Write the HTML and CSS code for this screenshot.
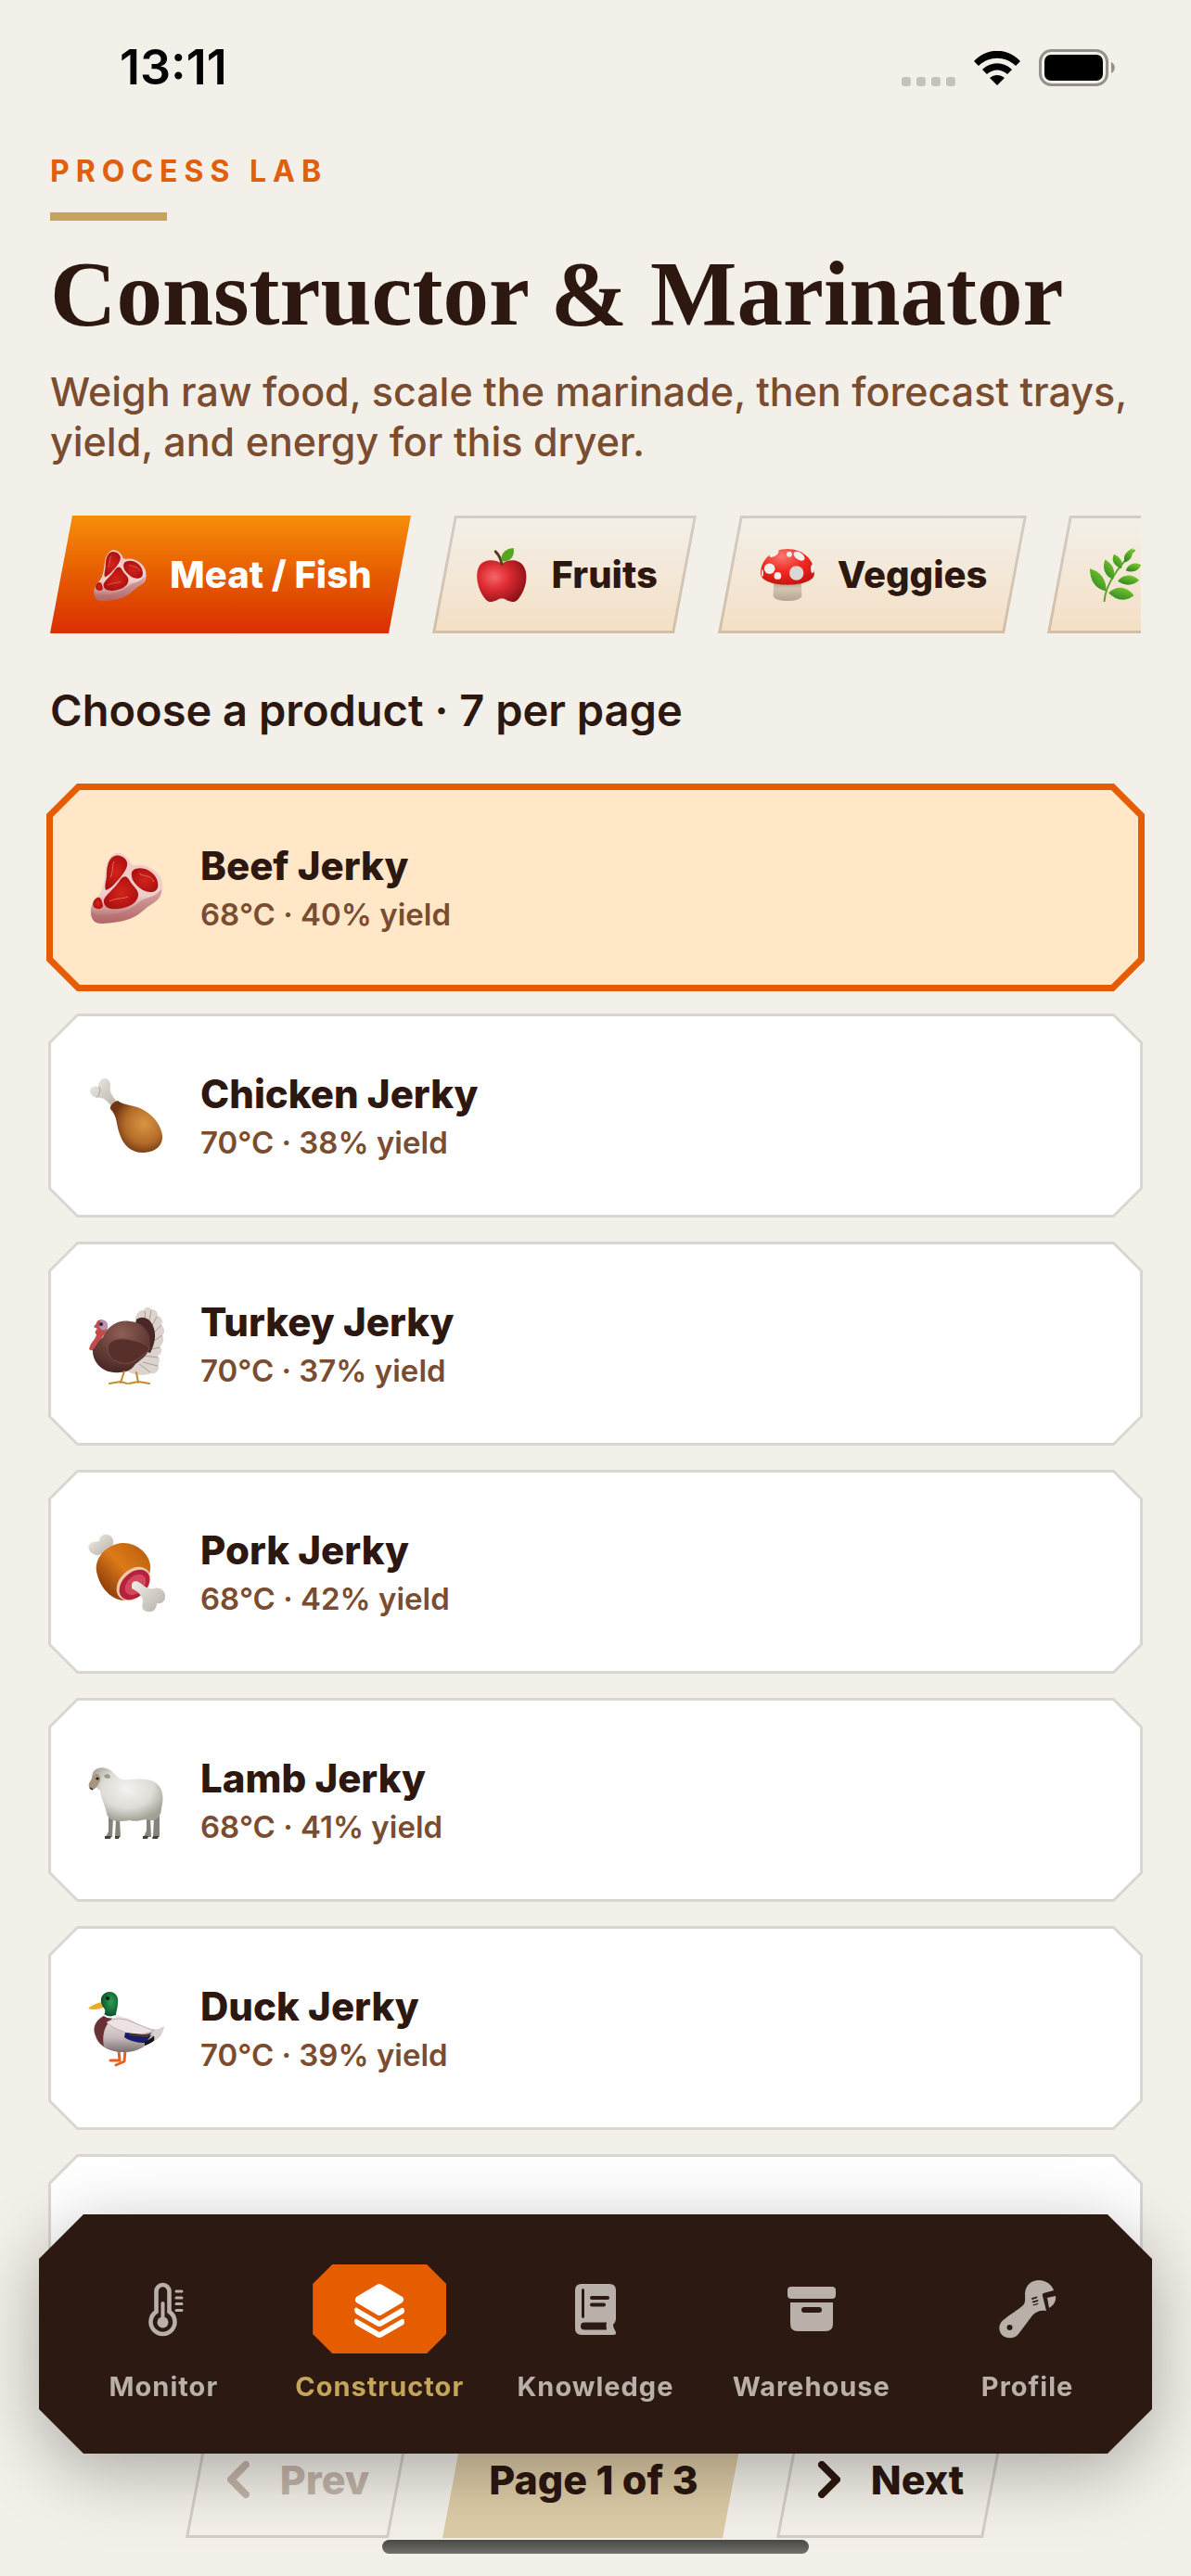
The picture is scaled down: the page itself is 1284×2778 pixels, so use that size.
FILE: index.html
```html
<!DOCTYPE html>
<html lang="en">
<head>
  <meta charset="UTF-8" />
  <title>Constructor &amp; Marinator</title>
  <meta name="viewport" content="width=device-width, initial-scale=1.0" />
  <link rel="stylesheet" href="styles.css">
</head>
<body>

  <!-- Shared food pictures -->
  <svg class="sprites" width="0" height="0" aria-hidden="true">
    <defs>
      <linearGradient id="gFat" x1="0" y1="0" x2="0" y2="1">
        <stop offset="0" stop-color="#f3c9c4" /><stop offset="0.6" stop-color="#f0cfca" /><stop offset="1" stop-color="#a85a5c" />
      </linearGradient>
      <radialGradient id="gMeat" cx="0.5" cy="0.5" r="0.6">
        <stop offset="0" stop-color="#d3231b" /><stop offset="1" stop-color="#a80f0f" />
      </radialGradient>
      <radialGradient id="gLeg" cx="0.65" cy="0.45" r="0.6">
        <stop offset="0" stop-color="#d99545" /><stop offset="0.6" stop-color="#b46c29" /><stop offset="1" stop-color="#6f3612" />
      </radialGradient>
      <linearGradient id="gBone" x1="0" y1="0" x2="1" y2="1">
        <stop offset="0" stop-color="#f0eee8" /><stop offset="1" stop-color="#b5b0a6" />
      </linearGradient>
      <radialGradient id="gTurkey" cx="0.5" cy="0.25" r="0.8">
        <stop offset="0" stop-color="#8f5f56" /><stop offset="0.5" stop-color="#68403a" /><stop offset="1" stop-color="#452422" />
      </radialGradient>
      <linearGradient id="gHam" x1="0.8" y1="0.1" x2="0.1" y2="0.8">
        <stop offset="0" stop-color="#c06510" /><stop offset="0.45" stop-color="#dd7a18" /><stop offset="1" stop-color="#8c3c0a" />
      </linearGradient>
      <radialGradient id="gWool" cx="0.5" cy="0.4" r="0.6">
        <stop offset="0" stop-color="#f3f2ee" /><stop offset="0.6" stop-color="#dddcd6" /><stop offset="1" stop-color="#a3a196" />
      </radialGradient>
      <linearGradient id="gDuckBody" x1="0" y1="0" x2="0" y2="1">
        <stop offset="0" stop-color="#efe4e4" /><stop offset="0.6" stop-color="#c9bcbd" /><stop offset="1" stop-color="#7b6f70" />
      </linearGradient>
      <radialGradient id="gDuckHead" cx="0.6" cy="0.4" r="0.6">
        <stop offset="0" stop-color="#2aa052" /><stop offset="1" stop-color="#0a5128" />
      </radialGradient>
      <radialGradient id="gApple" cx="0.35" cy="0.4" r="0.7">
        <stop offset="0" stop-color="#f4676a" /><stop offset="0.45" stop-color="#dc2a31" /><stop offset="1" stop-color="#8c1017" />
      </radialGradient>
      <radialGradient id="gCap" cx="0.4" cy="0.2" r="0.8">
        <stop offset="0" stop-color="#f8796f" /><stop offset="0.5" stop-color="#f22c25" /><stop offset="1" stop-color="#c8150f" />
      </radialGradient>
      <linearGradient id="gStem" x1="0" y1="0" x2="0" y2="1">
        <stop offset="0" stop-color="#9f8f7c" /><stop offset="0.4" stop-color="#d4c5b1" /><stop offset="1" stop-color="#b5a48e" />
      </linearGradient>
      <linearGradient id="gLeaf" x1="0.8" y1="0" x2="0.2" y2="1">
        <stop offset="0" stop-color="#7ccb2e" /><stop offset="1" stop-color="#2e8421" />
      </linearGradient>

      <symbol id="steak" viewBox="0 0 80 80">
        <path d="M29 3C35 2 41 7 44 12C45 16 47 17 52 16C62 14 78 24 79 36C80 46 79 51 70 56C62 60 58 67 48 72C38 77 24 78 15 79C7 79 3 76 2 69C1 61 4 55 9 50C15 43 15 38 17 29C18 20 18 8 29 3Z" fill="url(#gFat)" />
        <path d="M3 65C6 71 13 70 22 69C35 69 46 63 54 56C61 50 70 52 78 42C78 50 74 54 68 58C60 62 56 69 46 73C38 77 24 78 15 79C7 79 2 75 3 65Z" fill="#b97073" opacity="0.55" />
        <path d="M28 6C34 4 40 9 41 13C42 18 38 24 34 29C29 35 23 42 18 43C16 39 19 32 19 26C19 18 21 8 28 6Z" fill="url(#gMeat)" />
        <path d="M50 20C58 17 69 22 73 31C76 39 74 44 68 45C60 46 52 40 47 32C45 26 45 22 50 20Z" fill="url(#gMeat)" />
        <path d="M34 31C38 27 41 27 44 33C47 39 54 42 53 49C52 57 42 62 32 63C25 64 17 63 16 56C15 49 27 43 34 31Z" fill="url(#gMeat)" />
        <path d="M9 51C13 50 14 55 15 60C14 64 8 64 5 61C3 57 5 53 9 51Z" fill="url(#gMeat)" />
        <path d="M27 12C24 17 27 22 23 29M54 25C60 29 66 26 70 34M22 55C29 51 35 53 42 50" fill="none" stroke="#e66a5e" stroke-width="1" />
      </symbol>

      <symbol id="drumstick" viewBox="0 0 80 80">
        <path d="M9 21C3 20 0 15 1 12C3 8 7 8 10 9C10 4 13 0 17 0C21 0 24 5 23 9C22 14 24 18 31 26L26 32C20 25 16 20 9 21Z" fill="url(#gBone)" />
        <path d="M10 9C13 11 12 15 9 20" fill="none" stroke="#aaa59a" stroke-width="1" />
        <path d="M31 24C38 30 51 28 62 36C74 44 80 57 79 65C78 75 68 80 58 80C45 80 37 72 33 60C29 50 31 41 23 33C22 29 27 25 31 24Z" fill="url(#gLeg)" />
      </symbol>

      <symbol id="turkey" viewBox="0 0 80 80">
        <path d="M50 12C52 6 56 3 59 4C61 0 65 0 67 3C72 3 74 6 74 10C79 12 80 16 78 20C82 24 82 28 79 31C82 36 79 40 77 43C80 48 77 52 74 53C78 57 75 60 75 63C76 69 72 73 67 72C57 76 43 73 36 66L48 30Z" fill="#ddd3ce" />
        <path d="M60 5L61 20M67 4L64 20M73 11L66 24M78 20L68 30M79 31L68 38M76 44L67 46M74 55L60 53M74 64L58 60M66 71L54 62" stroke="#a89a95" stroke-width="1" />
        <path d="M51 14C58 9 66 13 69 21C73 30 71 40 66 50L46 44Z" fill="#4b2728" />
        <path d="M15 33C20 20 33 14 44 16C58 17 67 28 66 41C65 52 55 58 50 62C46 68 41 71 33 71C14 73 3 59 4 46C5 42 9 37 15 33Z" fill="url(#gTurkey)" />
        <path d="M21 41C25 34 36 34 45 36C56 38 65 41 65 46C60 51 53 58 44 61C33 63 17 57 21 41Z" fill="#57302c" stroke="#7a4d45" stroke-width="1" />
        <path d="M8 18C8 14 14 13 18 16C22 21 19 27 15 32C10 37 8 42 4 47C1 48 -1 46 1 43C2 38 7 36 8 30C6 29 6 27 9 24L5 22Z" fill="#c34b4b" />
        <path d="M12 15C17 14 21 17 20 22C18 27 13 26 11 22Z" fill="#bd91ad" />
        <circle cx="13" cy="19" r="2" fill="#24204d" />
        <path d="M38 70L34 82M51 71L53 82M22 83L34 81L41 83M43 83L53 81L65 83" fill="none" stroke="#c68b2c" stroke-width="2" stroke-linecap="round" />
      </symbol>

      <symbol id="ham" viewBox="0 0 80 80">
        <path d="M7 22C1 20 -2 15 0 11C3 7 7 8 11 7C11 2 15 -1 20 0C25 1 27 6 26 10L20 19C15 20 12 22 7 22Z" fill="url(#gBone)" />
        <path d="M36 9C50 8 65 20 66 33C67 43 62 51 54 59C46 67 39 73 32 70C19 66 10 52 8 39C6 24 20 10 36 9Z" fill="url(#gHam)" />
        <ellipse cx="48" cy="53" rx="21" ry="15" transform="rotate(-44 48 53)" fill="#f2c9a6" />
        <ellipse cx="49" cy="54" rx="19" ry="13" transform="rotate(-44 49 54)" fill="#b5213f" />
        <ellipse cx="50" cy="54" rx="13" ry="9" transform="rotate(-44 50 54)" fill="#d1495c" />
        <path d="M46 54C46 50 51 49 55 52C60 56 64 59 70 58C77 56 83 62 82 67C82 72 78 75 73 74C73 80 69 84 64 83C58 83 56 78 58 73C58 65 52 61 46 58Z" fill="url(#gBone)" />
      </symbol>

      <symbol id="lamb" viewBox="0 0 80 80">
        <path d="M26 60L25 80H18L21 74V58ZM33 60L34 80H28L29 60ZM66 58L67 80H59L62 73L62 58ZM76 55L76 80H69L70 57Z" fill="#85837a" />
        <path d="M17 79H24L23 82H17ZM28 79H33L32 82H28ZM58 79H64L63 82H58ZM69 79H75L74 82H68Z" fill="#42403c" />
        <path d="M4 11C6 5 16 3 23 8C28 12 31 17 37 18C46 19 61 15 71 21C80 26 81 38 78 49C78 58 72 63 65 62C60 59 53 65 44 62C34 64 21 64 19 55C18 47 13 40 12 30C5 25 1 18 4 11Z" fill="url(#gWool)" />
        <path d="M6 12C10 11 13 14 12 19C10 24 7 29 3 29C0 28 -1 25 0 22Z" fill="#a59682" />
        <path d="M16 14C19 11 23 12 23 16C20 18 17 17 16 14Z" fill="#9d9a8d" />
        <circle cx="9" cy="17" r="1.6" fill="#1d1a17" />
        <path d="M1 27L4 29" stroke="#403831" stroke-width="2" />
      </symbol>

      <symbol id="duck" viewBox="0 0 80 80">
        <path d="M32 64L33 75L23 75M39 64L38 76L29 80" fill="none" stroke="#e8601c" stroke-width="3" stroke-linejoin="round" stroke-linecap="round" />
        <path d="M15 12C10 12 2 16 -1 19C4 21 12 20 17 17Z" fill="#e8ac2a" />
        <path d="M16 26C8 30 3 38 6 47C9 59 22 66 36 66C52 67 63 59 69 51L80 40C70 44 60 39 50 34C42 28 33 28 26 26Z" fill="url(#gDuckBody)" />
        <path d="M16 27C8 31 3 39 7 48C9 54 12 57 16 60C14 49 16 39 23 32L26 28Z" fill="#6b3035" />
        <path d="M19 34C26 29 36 29 45 33C55 37 62 40 70 43C61 47 52 48 43 46C34 43 25 40 19 34Z" fill="#ece2e3" stroke="#bdafb0" stroke-width="1" />
        <path d="M39 45L67 48L61 56C52 56 44 54 38 50Z" fill="#191c6c" />
        <path d="M41 45C50 48 59 48 68 45L63 50L45 48Z" fill="#523a22" />
        <path d="M60 55C66 52 70 49 72 46L76 48C71 54 66 57 60 59Z" fill="#141316" />
        <path d="M67 45L81 38C80 46 76 52 70 54C71 50 70 47 67 45Z" fill="#d9d0d1" />
        <path d="M13 12C12 5 17 1 22 1C29 1 32 7 31 13C31 19 29 22 29 27C24 29 20 28 16 26C20 19 14 19 13 12Z" fill="url(#gDuckHead)" />
        <path d="M16 26C20 29 25 29 29 27" fill="none" stroke="#fff" stroke-width="2" />
        <circle cx="20" cy="8" r="2" fill="#08140c" />
      </symbol>

      <symbol id="apple" viewBox="0 0 60 60">
        <path d="M30 18C36 12 49 12 54 20C61 30 56 48 49 56C45 62 39 60 35 58C32 56 28 56 25 58C21 60 15 62 11 56C4 48 -1 30 5 20C10 12 24 12 30 18Z" fill="url(#gApple)" />
        <path d="M30 18C29 12 26 7 23 4" fill="none" stroke="#5b3a21" stroke-width="3" stroke-linecap="round" />
        <path d="M30 15C28 7 33 1 43 0C45 8 40 16 30 15Z" fill="#55a51f" />
      </symbol>

      <symbol id="mushroom" viewBox="0 0 60 60">
        <path d="M15 36H45L46 53C46 57 38 59 30 59C22 59 14 57 14 53Z" fill="url(#gStem)" />
        <path d="M30 1C48 1 60 14 60 28C60 37 46 41 30 41C14 41 0 37 0 28C0 14 12 1 30 1Z" fill="url(#gCap)" />
        <g fill="#f3efec">
          <ellipse cx="10" cy="23" rx="6" ry="6" />
          <circle cx="19" cy="31" r="4" />
          <ellipse cx="40" cy="28" rx="8" ry="8" fill="#dcd7d4" />
          <ellipse cx="43" cy="9" rx="7" ry="4" transform="rotate(35 43 9)" />
          <circle cx="32" cy="7" r="3" />
          <ellipse cx="15" cy="6" rx="6" ry="3" transform="rotate(-35 15 6)" />
          <ellipse cx="58" cy="23" rx="2" ry="5" />
          <ellipse cx="2" cy="28" rx="1" ry="4" />
        </g>
      </symbol>

      <symbol id="herb" viewBox="0 0 60 60">
        <path d="M16 60C17 40 33 20 50 2" fill="none" stroke="#5aa32b" stroke-width="2" />
        <g fill="url(#gLeaf)">
          <path d="M18 48C6 46 0 36 0 23C12 26 19 36 18 48Z" />
          <path d="M26 35C15 31 14 20 17 13C26 18 29 26 26 35Z" />
          <path d="M35 23C25 19 24 12 27 7C34 10 38 16 35 23Z" />
          <path d="M39 16C36 9 41 3 48 0C48 8 46 14 39 16Z" />
          <path d="M21 50C29 42 41 42 49 53C39 61 28 58 21 50Z" />
          <path d="M31 37C37 29 47 28 55 36C47 43 38 42 31 37Z" />
          <path d="M40 25C43 17 51 15 57 19C54 26 47 28 40 25Z" />
        </g>
      </symbol>
    </defs>
  </svg>

  <header class="status-bar">
    <span class="status-time">13:11</span>
    <div class="status-icons">
      <svg class="signal" viewBox="0 0 58 10" aria-hidden="true">
        <rect x="0" width="10" height="10" rx="3" /><rect x="16" width="10" height="10" rx="3" /><rect x="32" width="10" height="10" rx="3" /><rect x="48" width="10" height="10" rx="3" />
      </svg>
      <svg class="wifi" viewBox="0 0 50 38" aria-hidden="true">
        <path d="M0 11C14 -4 36 -4 50 11L45 16C34 5 16 5 5 16Z" />
        <path d="M9 20C18 11 32 11 41 20L36 25C29 19 21 19 14 25Z" />
        <path d="M17 29C22 25 28 25 33 29L25 37Z" />
      </svg>
      <svg class="battery" viewBox="0 0 82 40" aria-hidden="true">
        <rect x="1.5" y="1.5" width="72" height="37" rx="12" fill="none" stroke="#94918c" stroke-width="3" />
        <rect x="6" y="6" width="63" height="28" rx="7" />
        <path d="M78 14C83 16 83 24 78 26Z" fill="#94918c" />
      </svg>
    </div>
  </header>

  <main class="page">
    <p class="eyebrow">PROCESS LAB</p>
    <div class="accent-bar"></div>
    <h1 class="title">Constructor &amp; Marinator</h1>
    <p class="subtitle">Weigh raw food, scale the marinade, then forecast trays, yield, and energy for this dryer.</p>

    <div class="chips">
      <button class="slant chip chip-active"><svg class="chip-icon"><use href="#steak" /></svg>Meat / Fish</button>
      <button class="slant chip"><svg class="chip-icon"><use href="#apple" /></svg>Fruits</button>
      <button class="slant chip"><svg class="chip-icon"><use href="#mushroom" /></svg>Veggies</button>
      <button class="slant chip" aria-label="Herbs"><svg class="chip-icon"><use href="#herb" /></svg></button>
    </div>

    <h2 class="section-title">Choose a product · 7 per page</h2>

    <div class="products">
      <button class="card card-selected">
        <svg class="card-icon"><use href="#steak" /></svg>
        <span class="card-text"><span class="card-name">Beef Jerky</span><span class="card-meta">68°C · 40% yield</span></span>
      </button>
      <button class="card">
        <svg class="card-icon"><use href="#drumstick" /></svg>
        <span class="card-text"><span class="card-name">Chicken Jerky</span><span class="card-meta">70°C · 38% yield</span></span>
      </button>
      <button class="card">
        <svg class="card-icon"><use href="#turkey" /></svg>
        <span class="card-text"><span class="card-name">Turkey Jerky</span><span class="card-meta">70°C · 37% yield</span></span>
      </button>
      <button class="card">
        <svg class="card-icon"><use href="#ham" /></svg>
        <span class="card-text"><span class="card-name">Pork Jerky</span><span class="card-meta">68°C · 42% yield</span></span>
      </button>
      <button class="card">
        <svg class="card-icon"><use href="#lamb" /></svg>
        <span class="card-text"><span class="card-name">Lamb Jerky</span><span class="card-meta">68°C · 41% yield</span></span>
      </button>
      <button class="card">
        <svg class="card-icon"><use href="#duck" /></svg>
        <span class="card-text"><span class="card-name">Duck Jerky</span><span class="card-meta">70°C · 39% yield</span></span>
      </button>
      <div class="card"></div>
    </div>

    <div class="pager">
      <button class="slant pager-btn" disabled>
        <svg class="chevron" viewBox="0 0 24 40" aria-hidden="true"><path d="M20 4L4 20L20 36" /></svg>Prev
      </button>
      <span class="slant pager-page">Page 1 of 3</span>
      <button class="slant pager-btn">
        <svg class="chevron" viewBox="0 0 24 40" aria-hidden="true"><path d="M4 4L20 20L4 36" /></svg>Next
      </button>
    </div>
  </main>

  <!-- Bottom tab bar -->
  <div class="tabbar-wrap">
    <nav class="tabbar">
      <a class="tab" href="#">
        <span class="tab-pill">
          <svg class="tab-icon" viewBox="0 0 72 72" aria-hidden="true">
            <path d="M28.5 39V17a7 7 0 0 1 14 0V39a13 13 0 1 1-14 0Z" fill="none" stroke="currentColor" stroke-width="4.6" />
            <path d="M35.5 30V50" stroke="currentColor" stroke-width="4" stroke-linecap="round" />
            <circle cx="35.5" cy="50.5" r="6" />
            <path d="M50 17H56M50 24H56M50 30.500H56M50 37.500H56" stroke="currentColor" stroke-width="3" stroke-linecap="round" />
          </svg>
        </span>
        Monitor
      </a>
      <a class="tab tab-active" href="#">
        <span class="tab-pill">
          <svg class="tab-icon" viewBox="0 0 72 72" aria-hidden="true">
            <path d="M36 13L58 26L36 39L14 26Z" stroke="currentColor" stroke-width="8" stroke-linejoin="round" />
            <path d="M9 37C9 35 11 34 12 35L36 49L60 35C62 34 63 36 63 38C63 40 62 41 60 42L39 54Q36 56 33 54L12 42Q9 40 9 37Z" />
            <path d="M9 49C9 47 11 46 12 47L36 61L60 47C62 46 63 48 63 50C63 52 62 53 60 54L39 66Q36 68 33 66L12 54Q9 52 9 49Z" />
          </svg>
        </span>
        Constructor
      </a>
      <a class="tab" href="#">
        <span class="tab-pill">
          <svg class="tab-icon" viewBox="6 14 72 72" aria-hidden="true">
            <path fill-rule="evenodd" d="M27 23H57Q64 23 64 30V61Q64 64 61 67Q61 70 63 73Q66 78 61 78H27Q20 78 20 71V30Q20 23 27 23ZM28.500 28Q27 28 27 30V58Q27 60 28.500 60Q30 60 30 58V30Q30 28 28.500 28ZM30 64.500Q26 64.500 26 68.500Q26 72.500 30 72.500H54Q53 68 54 64.500ZM38 36Q36 36 36 38Q36 40 38 40H55Q57 40 57 38Q57 36 55 36ZM38 43.500Q36 43.500 36 45.500Q36 47.500 38 47.500H51Q53 47.500 53 45.500Q53 43.500 51 43.500Z" />
          </svg>
        </span>
        Knowledge
      </a>
      <a class="tab" href="#">
        <span class="tab-pill">
          <svg class="tab-icon" viewBox="0 0 72 72" aria-hidden="true">
            <rect x="10" y="12" width="52" height="13" rx="4" />
            <path fill-rule="evenodd" d="M13 29H59V52Q59 60 51 60H21Q13 60 13 52ZM28 34Q25 34 25 37Q25 40 28 40H44Q47 40 47 37Q47 34 44 34Z" />
          </svg>
        </span>
        Warehouse
      </a>
      <a class="tab" href="#">
        <span class="tab-pill">
          <svg class="tab-icon" viewBox="12 14 72 72" aria-hidden="true">
            <path fill-rule="evenodd" d="M45 33C46 24 52 19 60 19C68 19 74 24 76 30L65 33Q63 34 64 36L68 52C61 51 57 53 53 57L38 77C34 82 28 82 23 80C17 77 16 69 19 65C22 60 38 51 43 46C46 43 45 38 45 33ZM28.500 67A3 3 0 1 0 28.500 73A3 3 0 1 0 28.500 67ZM51.500 38.500L58 36.500L58.500 38L53 40ZM52.500 42L59 40L59.500 41.500L54 43.500ZM53.500 45.500L59.500 43.500L59 45L54 46.500Z" />
            <path d="M69 38L78 36C79 41 76 46 71 49Z" />
          </svg>
        </span>
        Profile
      </a>
    </nav>
  </div>
  <div class="home-indicator"></div>

</body>
</html>
```
FILE: styles.css
```css
* {
  box-sizing: border-box;
}

body {
  margin: 0;
  background: #f3f0e9;
  color: #2c1810;
  font-family: Inter, "Liberation Sans", sans-serif;
}

button {
  border: none;
  background: none;
  color: inherit;
  font-family: inherit;
  text-align: left;
}

svg {
  fill: currentColor;
  flex: none;
}

.sprites {
  position: absolute;
}

/* Status bar */
.status-bar {
  display: flex;
  justify-content: space-between;
  align-items: center;
  height: 146px;
  padding: 0 82px 0 129px;
  color: #000;
}

.status-time {
  font-size: 52px;
  font-weight: 600;
  line-height: 60px;
}

.status-icons {
  display: flex;
  align-items: flex-end;
  gap: 20px;
}

.signal {
  width: 58px;
  height: 10px;
  color: #c5c2bd;
}

.wifi {
  width: 50px;
  height: 38px;
}

.battery {
  width: 82px;
  height: 40px;
}

/* Page header */
.page {
  padding: 19px 54px 40px;
}

.eyebrow {
  margin: 0;
  color: #e05f0c;
  font-size: 32px;
  font-weight: 700;
  line-height: 40px;
  letter-spacing: 7px;
}

.accent-bar {
  width: 126px;
  height: 9px;
  margin-top: 24px;
  background: #c5a55a;
}

.title {
  margin: 24px 0 0;
  font-family: "Liberation Serif", serif;
  font-size: 99px;
  font-weight: 700;
  line-height: 110px;
}

.subtitle {
  margin: 23px 0 0;
  color: #7a4c30;
  font-size: 43px;
  font-weight: 500;
  line-height: 54px;
}

/* Slanted buttons */
.slant {
  position: relative;
  z-index: 0;
  display: flex;
  align-items: center;
  flex: none;
  height: 127px;
  font-weight: 800;
  white-space: nowrap;
}

.slant::before {
  content: "";
  position: absolute;
  inset: 0 12px;
  z-index: -1;
  border: 3px solid rgba(44, 24, 16, 0.16);
  transform: skewX(-10.7deg);
}

.chips {
  display: flex;
  gap: 23px;
  margin-top: 53px;
  overflow: hidden;
}

.chip {
  gap: 25px;
  padding: 0 42px 0 46px;
  font-size: 40px;
}

.chip::before {
  background: linear-gradient(#f3f0e9, #f4dfc5) border-box;
}

.chip-active {
  color: #fff;
}

.chip-active::before {
  border: none;
  background: linear-gradient(#f88e0a, #e65c00 50%, #d92f02);
}

.chip-icon {
  width: 58px;
  height: 60px;
  overflow: visible;
}

.section-title {
  margin: 55px 0 0;
  font-size: 47px;
  font-weight: 600;
  line-height: 56px;
}

/* Product cards */
.products {
  display: flex;
  flex-direction: column;
  gap: 26px;
  margin: 53px -2px 0;
}

.card {
  --line: 3px;
  --cut: 31px;
  position: relative;
  z-index: 0;
  display: flex;
  align-items: center;
  gap: 40px;
  min-height: 220px;
  padding: 0 44px;
  background: #d9d5d0;
}

.card::before {
  --cut: 29px;
  content: "";
  position: absolute;
  inset: var(--line);
  z-index: -1;
  background: #fff;
}

.card,
.card::before,
.tabbar,
.tab-pill {
  clip-path: polygon(
    var(--cut) 0, calc(100% - var(--cut)) 0,
    100% var(--cut), 100% calc(100% - var(--cut)),
    calc(100% - var(--cut)) 100%, var(--cut) 100%,
    0 calc(100% - var(--cut)), 0 var(--cut)
  );
}

.card-selected {
  --line: 7px;
  --cut: 33px;
  min-height: 224px;
  margin: -2px;
  padding: 0 46px;
  background: #e65c00;
}

.card-selected::before {
  background: #ffe7c7;
}

.card-icon {
  width: 80px;
  height: 80px;
  overflow: visible;
}

symbol {
  overflow: visible;
}

.card-text {
  display: flex;
  flex-direction: column;
  padding-top: 4px;
}

.card-name {
  font-size: 42px;
  font-weight: 800;
  line-height: 54px;
}

.card-meta {
  color: #7a4c30;
  font-size: 33px;
  font-weight: 600;
  line-height: 50px;
}

/* Pager */
.pager {
  display: flex;
  justify-content: center;
  gap: 34px;
  margin-top: 67px;
  font-size: 43px;
}

.pager-btn {
  gap: 33px;
  padding: 0 45px;
  font-size: 43px;
}

.pager-btn:disabled {
  color: #c3b5aa;
}

.pager-page {
  padding: 0 50px;
}

.pager-page::before {
  border: none;
  background: #dccba6;
}

.chevron {
  width: 24px;
  height: 40px;
  fill: none;
  stroke: currentColor;
  stroke-width: 8;
  stroke-linecap: round;
  stroke-linejoin: round;
}

/* Tab bar */
.tabbar-wrap {
  position: fixed;
  right: 42px;
  bottom: 132px;
  left: 42px;
  z-index: 5;
  filter: drop-shadow(0 18px 38px rgba(0, 0, 0, 0.3));
}

.tabbar {
  --cut: 48px;
  display: flex;
  padding: 54px 18px 48px;
  background: #2c1a12;
}

.tab {
  display: flex;
  flex: 1;
  flex-direction: column;
  align-items: center;
  gap: 12px;
  min-width: 0;
  color: #bab0aa;
  font-size: 29px;
  font-weight: 700;
  line-height: 48px;
  letter-spacing: 1px;
  text-decoration: none;
}

.tab-pill {
  --cut: 21px;
  display: flex;
  align-items: center;
  justify-content: center;
  width: 144px;
  height: 96px;
}

.tab-icon {
  width: 72px;
  height: 72px;
}

.tab-active {
  color: #c5a55a;
}

.tab-active .tab-pill {
  background: #e65c00;
  color: #fff;
}

.home-indicator {
  position: fixed;
  bottom: 24px;
  left: 50%;
  z-index: 6;
  width: 460px;
  height: 15px;
  border-radius: 8px;
  background: linear-gradient(#484846, #72716d);
  transform: translateX(-50%);
}
```
